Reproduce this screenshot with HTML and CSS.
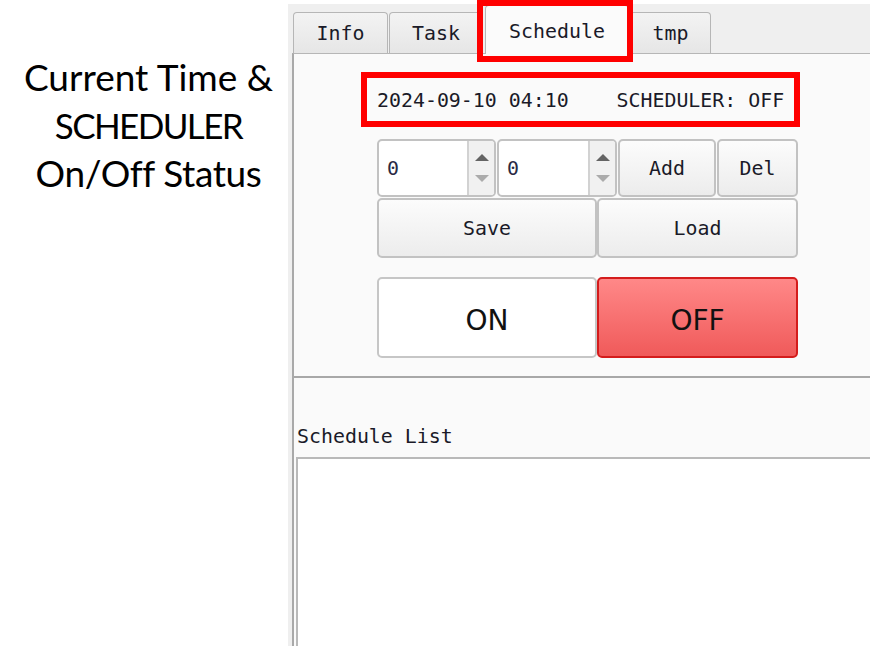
FILE: index.html
```html
<!DOCTYPE html>
<html>
<head>
<meta charset="utf-8">
<link rel="stylesheet" href="styles.css">
</head>
<body>
<div class="page">
  <div class="annot"><span class="l1">Current Time &amp;</span><br><span class="l2">SCHEDULER</span><br><span class="l3">On/Off Status</span></div>
  <div class="app">
    <div class="tabbar">
      <div class="tab tab-info">Info</div>
      <div class="tab tab-task">Task</div>
      <div class="tab tab-sched active">Schedule</div>
      <div class="tab tab-tmp">tmp</div>
    </div>
    <div class="panel">
      <div class="controls">
        <div class="clock">2024-09-10 04:10&nbsp;&nbsp;&nbsp;&nbsp;SCHEDULER: OFF</div>
        <div class="row r1">
          <div class="spin spin1">
            <span class="spin-val">0</span>
            <span class="spin-arrows"><i class="up"></i><i class="down"></i></span>
          </div>
          <div class="spin spin2">
            <span class="spin-val">0</span>
            <span class="spin-arrows"><i class="up"></i><i class="down"></i></span>
          </div>
          <div class="btn btn-add">Add</div>
          <div class="btn btn-del">Del</div>
        </div>
        <div class="row r2">
          <div class="btn btn-save">Save</div>
          <div class="btn btn-load">Load</div>
        </div>
        <div class="row r3">
          <div class="big big-on">ON</div>
          <div class="big big-off">OFF</div>
        </div>
      </div>
      <div class="sep"></div>
      <div class="listlabel">Schedule List</div>
      <div class="listbox"></div>
    </div>
  </div>
  <div class="mark mark-tab"></div>
  <div class="mark mark-clock"></div>
</div>
</body>
</html>
```
FILE: styles.css
```css
* { box-sizing: border-box; }
html, body { margin: 0; padding: 0; background: #ffffff; }
.page {
  position: relative;
  display: flex;
  width: 870px;
  height: 646px;
  overflow: hidden;
}
.annot {
  flex: none;
  width: 288px;
  padding-top: 53px;
  padding-left: 9px;
  text-align: center;
  font-family: Lato, "Open Sans", sans-serif;
  font-size: 37px;
  line-height: 48px;
  color: #000;
  white-space: nowrap;
}
.annot .l2 { letter-spacing: -1.6px; font-size: 35px; }
.annot .l3 { letter-spacing: -0.4px; }
.app {
  flex: 1;
  margin-top: 4px;
  background: #efefef;
  display: flex;
  flex-direction: column;
  font-family: "DejaVu Sans Mono", monospace;
  font-size: 19.9px;
  color: #1a1a28;
}
.tabbar {
  flex: none;
  height: 49px;
  display: flex;
  align-items: flex-end;
  padding-left: 5px;
  position: relative;
  z-index: 2;
}
.tab {
  height: 41px;
  border: 1px solid #b6b6b6;
  border-bottom: none;
  border-radius: 4px 4px 0 0;
  background: linear-gradient(#f3f3f3, #e6e6e6);
  display: flex;
  align-items: center;
  justify-content: center;
  padding-top: 1px;
}
.tab-info { width: 95px; margin-right: 1px; }
.tab-task { width: 94px; margin-right: 2px; }
.tab-sched { width: 144px; margin-right: 1px; }
.tab-tmp { width: 81px; }
.tab.active {
  height: 49px;
  margin-bottom: -1px;
  background: #fbfbfb;
  padding-top: 2px;
}
.panel {
  flex: 1;
  margin-left: 4px;
  background: #fafafa;
  border-top: 1px solid #b6b6b6;
  border-left: 2px solid #a9a9a9;
  display: flex;
  flex-direction: column;
}
.controls {
  padding-left: 83px;
  width: 504px;
}
.clock {
  height: 85px;
  padding-top: 35px;
  line-height: 24px;
  white-space: nowrap;
}
.row { display: flex; }
.r1 { height: 58px; gap: 1px; }
.r2 { height: 60px; margin-top: 1px; }
.r3 { height: 81px; margin-top: 19px; }
.spin {
  display: flex;
  background: #ffffff;
  border: 2px solid #c2c2c2;
  border-radius: 5px;
  overflow: hidden;
}
.spin1 { width: 119px; }
.spin2 { width: 120px; }
.spin-val {
  flex: 1;
  padding-left: 8px;
  display: flex;
  align-items: center;
  color: #2a2a44;
}
.spin-arrows {
  flex: none;
  width: 27px;
  border-left: 2px solid #d2d2d2;
  background: #f1f1f1;
  display: flex;
  flex-direction: column;
  align-items: center;
  justify-content: center;
  gap: 14px;
}
.spin-arrows i {
  display: block;
  width: 0;
  height: 0;
  border-left: 7px solid transparent;
  border-right: 7px solid transparent;
}
.spin-arrows .up { border-bottom: 7px solid #646464; }
.spin-arrows .down { border-top: 7px solid #ababab; }
.btn {
  display: flex;
  align-items: center;
  justify-content: center;
  border: 2px solid #c2c2c2;
  border-radius: 5px;
  background: linear-gradient(#fcfcfc, #ececec);
}
.btn-add { width: 98px; }
.btn-del { width: 81px; }
.btn-save { width: 220px; }
.btn-load { width: 201px; }
.big {
  display: flex;
  align-items: center;
  justify-content: center;
  padding-top: 5px;
  border-radius: 5px;
  font-family: "DejaVu Sans", sans-serif;
  font-size: 28px;
  color: #111;
}
.big-on {
  width: 220px;
  background: #ffffff;
  border: 2px solid #c6c6c6;
}
.big-off {
  width: 201px;
  background: linear-gradient(#ff8888, #f05a5a);
  border: 2px solid #d41c1c;
}
.sep {
  height: 2px;
  margin-top: 18px;
  background: #a8a8a8;
}
.listlabel {
  margin-top: 47px;
  padding-left: 3px;
  line-height: 24px;
  height: 24px;
}
.listbox {
  flex: 1;
  margin-top: 8px;
  margin-left: 2px;
  background: #ffffff;
  border: 2px solid #b9b9b9;
  border-right: none;
  border-bottom: none;
}
.mark {
  position: absolute;
  border: 6px solid #ff0000;
  z-index: 5;
}
.mark-tab { left: 477px; top: 0; width: 156px; height: 62px; }
.mark-clock { left: 361px; top: 72px; width: 439px; height: 55px; }
```
